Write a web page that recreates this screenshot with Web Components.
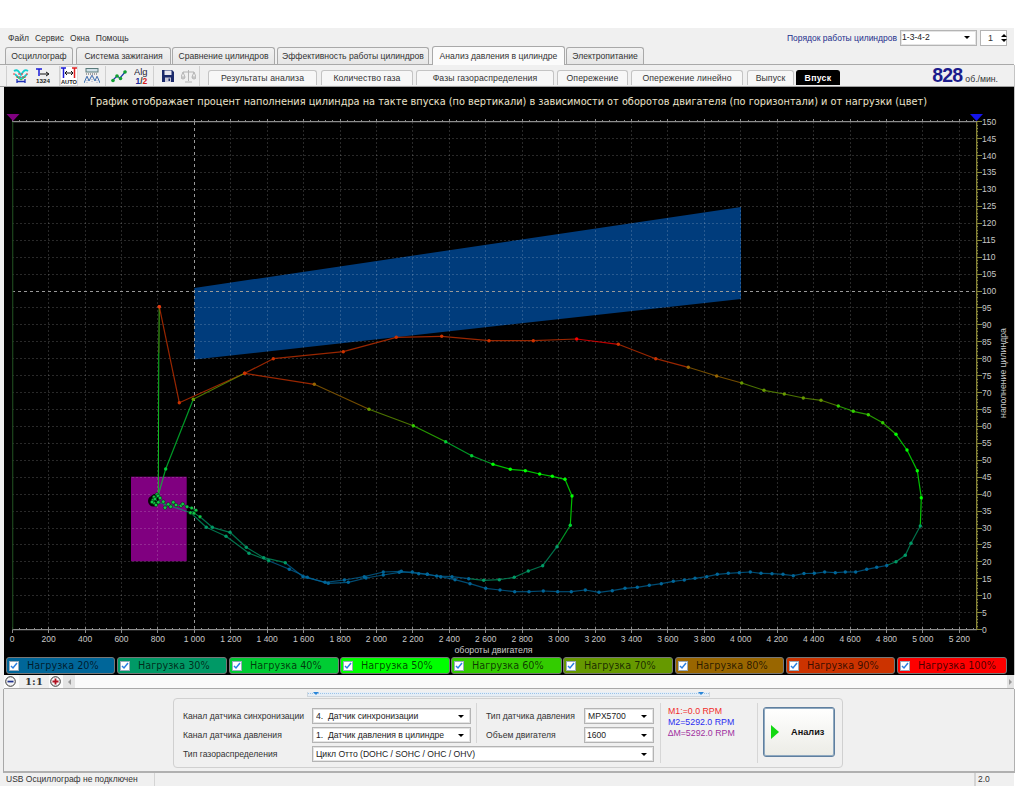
<!DOCTYPE html>
<html lang="ru">
<head>
<meta charset="utf-8">
<title>Анализ давления в цилиндре</title>
<style>
html,body{margin:0;padding:0;background:#fff}
body{font:8.5px "Liberation Sans",Arial,sans-serif;color:#222}
</style>
</head>
<body>
<scope-app></scope-app>
<script>
const FONT='"Liberation Sans",Arial,sans-serif';
function define(name,css,html,extra){
  customElements.define(name,class extends HTMLElement{
    constructor(){super();const r=this.attachShadow({mode:'open'});
      r.innerHTML='<style>'+css+'</style>'+(typeof html==='function'?html(this):html);}
    connectedCallback(){if(extra)extra(this)}
  });
}
/* primitive widgets */
define('win-tab',`:host{display:flex;align-items:center;justify-content:center;box-sizing:border-box;height:17px;align-self:flex-end;
  border:1px solid #a9a9a9;border-bottom:0;border-radius:3px 3px 0 0;background:linear-gradient(#f2f2f2,#e6e6e6);
  font:8.600px ${FONT};color:#333;white-space:nowrap}
  :host([active]){height:19px;background:#fbfbfb;margin-bottom:-1px;position:relative;z-index:1}`,'<slot></slot>');
define('sub-tab',`:host{display:flex;align-items:center;justify-content:center;box-sizing:border-box;height:15px;
  border:1px solid #c4c4c4;border-bottom:0;border-radius:3px 3px 0 0;background:#f7f7f7;
  font:8.700px ${FONT};color:#333;white-space:nowrap;letter-spacing:.1px}
  :host([active]){background:#000;border-color:#000;color:#fff;font-weight:bold;letter-spacing:.3px}`,'<slot></slot>');
define('win-combo',`:host{display:flex;align-items:center;box-sizing:border-box;height:16px;background:#fff;
  border:1px solid #b4b4b4;box-shadow:inset 0 0 0 1px #e4e4e4;padding:0 6px 0 3px;font:8.600px ${FONT};color:#222;white-space:pre}
  span{flex:1;overflow:hidden;padding-bottom:1px}
  i{width:0;height:0;border:3px solid transparent;border-top:3px solid #000;border-bottom:0;flex:none}`,
  '<span><slot></slot></span><i></i>');
define('field-label',`:host{display:flex;align-items:center;font:8.600px ${FONT};color:#333;white-space:nowrap}`,'<slot></slot>');
define('tool-sep',`:host{display:block;width:1px;height:20px;background:#d0d0d0;flex:none;align-self:center}`,'');
define('tool-icon',`:host{display:flex;align-items:center;justify-content:center;flex:none;height:20px;align-self:center}
  :host([pressed]){background:#fff;box-shadow:inset 0 0 0 1px #ddd}`,'<slot></slot>');

/* menu row */
define('menu-row',`:host{display:flex;align-items:center;height:19px;box-sizing:border-box;padding:0 7px 0 8px;font:8.500px ${FONT};color:#333}
  .m{display:flex;gap:6px;flex:1}
  .o{color:#1c2f8c;margin-right:3px}
  win-combo{width:77px;height:16px;padding-left:1px}
  .spin{margin-left:3px;width:27px;height:16px;box-sizing:border-box;border:1px solid #b4b4b4;background:#fff;display:flex;align-items:center;padding:0 4px 0 7px;gap:8px;font-size:9px}
  .ar{display:flex;flex-direction:column;gap:2px}
  .ar b{display:block;width:0;height:0;border:3px solid transparent;border-top:0;border-bottom:3px solid #000}
  .ar b+b{border-bottom:0;border-top:3px solid #000}`,
  `<div class="m"><span>Файл</span><span>Сервис</span><span>Окна</span><span>Помощь</span></div>
   <span class="o">Порядок работы цилиндров</span>
   <win-combo>1-3-4-2</win-combo>
   <div class="spin"><span>1</span><div class="ar"><b></b><b></b></div></div>`);

/* main tabs */
define('tab-strip',`:host{display:flex;height:18px;box-sizing:border-box;padding-left:5px;border-bottom:1px solid #a9a9a9;align-items:flex-end}`,
  `<win-tab style="width:68px;margin-right:3px">Осциллограф</win-tab>
   <win-tab style="width:95px;margin-right:1px">Система зажигания</win-tab>
   <win-tab style="width:103px;margin-right:2px">Сравнение цилиндров</win-tab>
   <win-tab style="width:152px;margin-right:3px">Эффективность работы цилиндров</win-tab>
   <win-tab active style="width:133px;margin-right:1px">Анализ давления в цилиндре</win-tab>
   <win-tab style="width:78px">Электропитание</win-tab>`);

/* toolbar */
const SVG=(w,h,b)=>`<svg xmlns="http://www.w3.org/2000/svg" width="${w}" height="${h}" viewBox="0 0 ${w} ${h}">${b}</svg>`;
const ICONS={
 net:SVG(16,16,`<path d="M1 3q3-2 5 1l2 3 2-3q2-3 5-1M2 6q3 4 6 4t6-4" fill="none" stroke="#12d0d0" stroke-width="1.800"/>
   <path d="M0 6h3M5 6h6M13 6h3M3 9h10" stroke="#ec3a40" stroke-dasharray="2 1"/><path d="M4 9l4 3 4-3" fill="none" stroke="#2ab34a"/>
   <path d="M4 11v4M12 11v4M4 13.500h8" fill="none" stroke="#1d2fb5" stroke-width="1.300"/>`),
 scale:SVG(14,16,`<path d="M0 1h6M3 1v7" stroke="#1a1ad8" stroke-width="1.500" fill="none"/><path d="M4 6h8M10 4l3 2-3 2" stroke="#111" fill="none"/>
   <text x="0" y="15" font-family="Liberation Sans" font-size="6" font-weight="bold" fill="#222" textLength="14" lengthAdjust="spacingAndGlyphs">1324</text>`),
 auto:SVG(16,17,`<path d="M0 1h5M2.500 1v10" stroke="#1a1ad8" stroke-width="1.500" fill="none"/><path d="M11 1h5M13.500 1v10" stroke="#e02020" stroke-width="1.500" fill="none"/>
   <path d="M4 6h8M6 4l-2 2 2 2M10 4l2 2-2 2" stroke="#111" fill="none"/>
   <text x="0" y="16.500" font-family="Liberation Sans" font-size="6" font-weight="bold" fill="#222" textLength="16" lengthAdjust="spacingAndGlyphs">AUTO</text>`),
 wave:SVG(16,16,`<rect x="2" y="0.500" width="12" height="3.500" fill="#cfe0e8" stroke="#5a7a7a"/><path d="M2 6h12" stroke="#555" stroke-dasharray="1 1"/>
   <path d="M0 15l3-7 2 5 3-6 3 6 2-5 3 7" fill="none" stroke="#3a6fb0"/><path d="M3 8v7M8 7v8M13 8v7" stroke="#a0a0c0" stroke-dasharray="1 1"/>`),
 zig:SVG(16,14,`<path d="M1 12l5-5 3 2 6-7" fill="none" stroke="#1a3aa8" stroke-width="1.200"/><g fill="#10a030"><circle cx="2" cy="11.500" r="1.800"/><circle cx="6" cy="7" r="1.800"/><circle cx="9.500" cy="9.500" r="1.800"/><circle cx="14" cy="3" r="1.800"/></g>`),
 alg:SVG(14,18,`<text x="0" y="8" font-family="Liberation Sans" font-size="9.500" fill="#223" textLength="13.500" lengthAdjust="spacingAndGlyphs">Alg</text>
   <text x="1.500" y="17" font-family="Liberation Sans" font-size="8.500" font-weight="bold" fill="#1a2a9a">1<tspan fill="#333">/</tspan><tspan fill="#d82020">2</tspan></text>`),
 save:SVG(12,12,`<path d="M0 0h10l2 2v10H0z" fill="#1b2a6b"/><rect x="2.500" y="0.500" width="7" height="4.500" fill="#e8e8f0"/><rect x="3" y="7.500" width="6" height="4.500" fill="#c9c9d8"/><rect x="6.500" y="8.500" width="1.500" height="2.500" fill="#1b2a6b"/>`),
 bal:SVG(15,14,`<path d="M7.500 1v11M4 13h7M2 3h11M2 3l-2 5M2 3l2 5M13 3l-2 5M13 3l2 5" fill="none" stroke="#b4b4b4"/><path d="M0 8a2 2 0 0 0 4 0zM11 8a2 2 0 0 0 4 0z" fill="#d8d8d8" stroke="#b4b4b4"/>`)
};
define('tool-bar',`:host{display:flex;height:22px;box-sizing:border-box;padding:0 16px 0 6px;align-items:flex-end;border-bottom:1px solid #a0a0a0;background:#f0f0f0;box-shadow:1px 0 0 #c4c4c4}
  .ic{display:flex;height:21px;align-items:center}
  .tabs{display:flex;margin-left:8px;align-items:flex-start;align-self:flex-end;height:16px}
  .tabs sub-tab{margin-right:3px}
  .rpm{margin-left:auto;display:flex;align-items:baseline;align-self:flex-end;height:21px;color:#1c1c8c}
  .rpm b{font:bold 19.500px ${FONT};line-height:20px;margin-right:3px;letter-spacing:-.8px}
  .rpm span{font:8.700px ${FONT};color:#333}`,
  `<div class="ic"><tool-sep></tool-sep>
   <tool-icon style="margin-left:6px">${ICONS.net}</tool-icon>
   <tool-icon style="margin-left:7px">${ICONS.scale}</tool-icon>
   <tool-sep style="margin-left:9px"></tool-sep>
   <tool-icon pressed style="width:18px">${ICONS.auto}</tool-icon>
   <tool-icon style="margin-left:6px">${ICONS.wave}</tool-icon>
   <tool-sep style="margin-left:5px"></tool-sep>
   <tool-icon style="margin-left:5px">${ICONS.zig}</tool-icon>
   <tool-icon style="margin-left:7px">${ICONS.alg}</tool-icon>
   <tool-sep style="margin-left:5px"></tool-sep>
   <tool-icon style="margin-left:8px">${ICONS.save}</tool-icon>
   <tool-icon style="margin-left:7px">${ICONS.bal}</tool-icon>
   <tool-sep style="margin-left:3px"></tool-sep></div>
   <div class="tabs">
    <sub-tab style="width:109px;margin-right:4px">Результаты анализа</sub-tab>
    <sub-tab style="width:92px">Количество газа</sub-tab>
    <sub-tab style="width:138px">Фазы газораспределения</sub-tab>
    <sub-tab style="width:71px">Опережение</sub-tab>
    <sub-tab style="width:112px;margin-right:4px">Опережение линейно</sub-tab>
    <sub-tab style="width:47px;margin-right:2px">Выпуск</sub-tab>
    <sub-tab active style="width:44px">Впуск</sub-tab>
   </div>
   <div class="rpm"><b>828</b><span>об./мин.</span></div>`);

/* chart */
const C=['#006699','#009966','#00cc33','#00ff00','#33cc00','#669900','#996600','#cc3300','#ff0000'];
const X=v=>12.2+.18214*v, Y=v=>629.6-3.386*v;
const OUTER=[
 [1,[[190.7,512.7],[206.3,527.3],[226,536.3],[249,553.3],[268.7,560.7]]],
 [0,[[289.3,569.3],[307.3,577.3],[328.3,583.3],[348.3,582.3],[366,578],[383.3,575],[399.3,572.3],[412.3,572],[427.3,574.3],[440.7,576.7],[455,579.7],[470,583.7],[485.7,588.3],[500,590],[514.7,591.7],[529,591.7],[543.3,591],[557.7,591.7],[571.3,591.7],[585.3,590],[599,592.3],[612.3,590.7],[625,588.3],[637.3,587.3],[649.3,585.3],[661.3,583.7],[673.3,581.3],[684.3,580],[695,578.3],[706.7,576.7],[717.3,574.3],[728.3,573.3],[739.3,572.7],[750.3,572],[761,573.3],[772,573.7],[783,574.3],[793.3,575.7],[804,573.5],[814.3,573.3],[824.7,572],[835.3,572.7],[845.3,572],[855.7,572],[866.7,569.3],[876.7,567.3],[886.7,565.5]]],
 [1,[[896,561.7],[905.3,555.3],[911,543.3],[920.3,526]]],
 [3,[[921.3,497.7],[917.3,470.7],[907,450],[896,434.3]]],
 [4,[[882.7,422.7],[868.3,414.7],[853.3,411.3],[838.3,406]]],
 [5,[[821,400.3],[803.3,398],[784.3,394],[764,390.3],[741.7,383]]],
 [6,[[716.7,376],[688.3,367.3]]],
 [7,[[655.7,358.7],[618.3,344.3]]],
 [8,[[576.7,339]]],
 [7,[[533.3,340.7],[489,340.7],[441.7,336.3],[396.3,337.3],[343.3,351.7],[273.3,358.7],[244.7,373.3],[179.3,402.7]]],
 [7,[[159.3,306.7]]]
];
const INNER=[
 [1,[[200,516.7],[212.3,527.3],[230,532.3],[246.3,547.3],[263.7,557.7],[285.3,562.7]]],
 [0,[[303,576.7],[325,582.3],[344.3,580],[364.3,576.7],[383.3,572],[401.3,571.3],[418.7,573.7],[427.3,574.3],[436.7,576],[452,576.7],[468.7,578.7]]],
 [1,[[483.7,580.3],[499.3,579.7],[514.3,577.3],[528.3,571],[542.7,565.7],[557,546.7]]],
 [2,[[570.3,525.3]]],
 [3,[[572,496],[565,479.3],[552.3,476.3],[539.7,474],[525.3,470.7],[510.3,469.3],[493,464.3]]],
 [2,[[471.7,455.7],[445.7,441.7]]],
 [4,[[413.3,425.7]]],
 [5,[[369,409.3]]],
 [6,[[314.3,384.3]]],
 [7,[[244.7,373.3]]],
 [5,[[193.3,399.3]]],
 [2,[[165.7,469],[158.3,495]]]
];
const CLUSTER=[[154,497],[153,500],[154,503],[156,505],[152,502],[157,494.500],[158,496],[155,499],[158.3,502.3],[160,498],[163.3,501.7],[165,507.7],[168.3,504.3],[170.7,506.7],[173.3,502.3],[176,505],[181,505.7],[182.7,504],[187,506.7],[191.7,508],[196,510.3],[190.3,512.7],[194,513.3],[200,516.7]];
function curve(runs,start){
  let p=start,out='',dots='';
  for(const [ci,pts] of runs){for(const q of pts){
    if(p)out+=`<line x1="${p[0]}" y1="${p[1]}" x2="${q[0]}" y2="${q[1]}" stroke="${C[ci]}" stroke-opacity=".75" stroke-width="1.200"/>`;
    dots+=`<circle cx="${q[0]}" cy="${q[1]}" r="1.700" fill="${C[ci]}"/>`;p=q;}}
  return out+dots;
}
function chart(){
  let g='',bright='',t='';
  const L=12.2,R=976.7,T=121.7,B=629.6;
  for(let v=0;v<=5200;v+=200){const x=X(v);
    if(v===1000)bright+=`<line x1="${x}" x2="${x}" y1="${T}" y2="${B}"/>`;
    else if(v>0)g+=`<line x1="${x}" x2="${x}" y1="${T}" y2="${B}"/>`;
    const lab=v>=1000?Math.floor(v/1000)+' '+String(v%1000).padStart(3,'0'):String(v);
    t+=`<text x="${x}" y="642" text-anchor="middle">${lab}</text>`;}
  for(let v=5;v<150;v+=5){const y=Y(v);
    if(v===100)bright+=`<line x1="${L}" x2="${R}" y1="${y}" y2="${y}"/>`;
    else g+=`<line x1="${L}" x2="${R}" y1="${y}" y2="${y}"/>`;}
  let yt='',ml='';
  for(let v=0;v<=150;v+=5){t+=`<text x="982" y="${Y(v)+3}">${v}</text>`;
    yt+=`<line x1="${R}" x2="${R+5}" y1="${Y(v)}" y2="${Y(v)}"/>`;}
  for(let v=0;v<=150;v+=1)ml+=`<line x1="${R}" x2="${R+1.6}" y1="${Y(v)}" y2="${Y(v)}"/>`;
  let bt='';
  for(let v=0;v<=5280;v+=40){const x=X(v);const big=v%200===0;
    bt+=`<line x1="${x}" x2="${x}" y1="${B-(big?3:1.500)}" y2="${B+(big?3:0)}"/>`+`<line x1="${x}" x2="${x}" y1="${T-(big?3:1.500)}" y2="${T}"/>`;}
  let cl='';
  for(const q of [[153.5,501,5.500],[155,498,4]])cl+=`<circle cx="${q[0]}" cy="${q[1]}" r="${q[2]}" fill="#050505"/>`;
  const dots=CLUSTER.map(q=>`<circle cx="${q[0]}" cy="${q[1]}" r="1.800" fill="#12c845" stroke="#000" stroke-width=".4"/>`).join('');
  const path=CLUSTER.slice(6).map(q=>q.join(',')).join(' ');
  return `<svg xmlns="http://www.w3.org/2000/svg" width="1010" height="570" viewBox="4 87 1010 570">
   <rect x="4" y="87" width="1010" height="570" fill="#000"/>
   <text x="508.500" y="105" text-anchor="middle" font-family="DejaVu Sans" font-size="10.500" fill="#ece4cc" textLength="837" lengthAdjust="spacingAndGlyphs">График отображает процент наполнения цилиндра на такте впуска (по вертикали) в зависимости от оборотов двигателя (по горизонтали) и от нагрузки (цвет)</text>
   <polygon points="194.300,288 741,207 741,299 194.300,359.500" fill="#003c7c"/>
   <rect x="131" y="476.700" width="55.700" height="84.600" fill="#800080"/>
   <g stroke="#fff" stroke-opacity=".16" stroke-dasharray="2 2" shape-rendering="crispEdges">${g}</g>
   <g stroke="#999" stroke-dasharray="3 3" shape-rendering="crispEdges">${bright}</g>
   <g stroke="#8d8d8d" stroke-width="1.300"><line x1="12" x2="977" y1="${T}" y2="${T}"/><line x1="12" x2="977" y1="${B}" y2="${B}"/></g>
   <g stroke="#8d8d8d" shape-rendering="crispEdges">${bt}</g>
   <line x1="12.700" x2="12.700" y1="${T}" y2="${B}" stroke="#1d461d" stroke-width="1.200"/>
   <line x1="${R}" x2="${R}" y1="${T}" y2="${B}" stroke="#8c8a3a" stroke-width="1.300"/>
   <g stroke="#8c8a3a" shape-rendering="crispEdges">${yt}${ml}</g>
   <polygon points="6.500,114 19.500,114 13,121" fill="#800080"/>
   <polygon points="970,114 983,114 976.500,121" fill="#1414ee"/>
   <line x1="159.300" y1="306.700" x2="158.800" y2="353" stroke="#2f7d10" stroke-width="1.500"/>
   <line x1="158.800" y1="353" x2="158.300" y2="493" stroke="#10c020" stroke-width="1"/>
   ${cl}
   <polyline points="${path}" fill="none" stroke="#00a050"/>
   ${curve(OUTER,[158,502])}
   ${curve(INNER,null)}
   ${dots}
   <circle cx="159.300" cy="306.700" r="1.800" fill="#e03a10"/>
   <g font-family="Liberation Sans" font-size="8.500" fill="#c8c8c8">${t}</g>
   <text x="493.500" y="653" text-anchor="middle" font-family="Liberation Sans" font-size="8.800" fill="#c8c8c8">обороты двигателя</text>
   <text transform="translate(1006 373) rotate(-90)" text-anchor="middle" font-family="Liberation Sans" font-size="8.700" fill="#c8c8c8">наполнение цилиндра</text>
  </svg>`;
}
define('scope-chart',`:host{display:block;height:570px;line-height:0;margin-left:4px;width:1010px;box-shadow:1px 0 0 #c4c4c4}`,chart);

/* legend */
define('load-chip',`:host{display:flex;align-items:center;box-sizing:border-box;height:17px;border:1px solid #777;border-radius:3px;
  background:var(--c);font:9.700px "DejaVu Sans",sans-serif;color:rgba(0,0,0,.72);white-space:nowrap;padding-left:2px}
  .b{width:10px;height:10px;background:#fff;border:1px solid #9ab;box-sizing:border-box;margin-right:8px;flex:none;display:flex}
  svg{display:block}`,
  `<span class="b"><svg width="8" height="8" viewBox="0 0 8 8"><path d="M1 4l2 2 4-5" fill="none" stroke="#2a7fe0" stroke-width="1.500"/></svg></span><slot></slot>`);
define('load-legend',`:host{display:flex;height:18px;background:#000;box-sizing:border-box;padding-left:2px;margin-left:4px;width:1010px;align-items:flex-start;box-shadow:1px 0 0 #c4c4c4}`,
  ()=>[[109,2,20],[110,2,30],[110,1,40],[110,1,50],[111,1,60],[110,2,70],[109,2,80],[109,2,90],[110,0,100]].map((d,i)=>
   `<load-chip style="--c:${C[i]};width:${d[0]}px;margin-right:${d[1]}px">Нагрузка ${d[2]}%</load-chip>`).join(''));

/* zoom bar */
define('zoom-bar',`:host{display:flex;height:14px;box-sizing:border-box;align-items:center;border-bottom:1px solid #a8a8a8;background:#fafafa;margin-left:4px;width:1010px;padding-left:1px;position:relative}
  svg{display:block;flex:none}
  .r{width:30px;margin:0 1px 0 3px;height:13px;background:#eee;text-align:center;font:bold 10px "DejaVu Serif",serif;line-height:14px;color:#333;letter-spacing:.2px}
  .a{width:12px;height:13px;background:#e4e4e4;margin-left:2px;display:flex;align-items:center;justify-content:center}
  .t{flex:1}
  i{width:0;height:0;border:3px solid transparent;border-right:3px solid #999;border-left:0}
  .e i{border-left:3px solid #999;border-right:0}
  .e{width:7px;margin:0}`,
  `<svg width="11" height="11" viewBox="0 0 11 11"><circle cx="5.500" cy="5.500" r="4.800" fill="#f4f4f4" stroke="#333"/><rect x="2.500" y="4.700" width="6" height="1.700" fill="#1c2f8c"/></svg>
   <div class="r">1:1</div>
   <svg width="11" height="11" viewBox="0 0 11 11"><circle cx="5.500" cy="5.500" r="4.800" fill="#f4f4f4" stroke="#333"/><path d="M2.500 5.500h6M5.500 2.500v6" stroke="#b01020" stroke-width="1.800"/></svg>
   <div class="a"><i></i></div><div class="t"></div><div class="a e"><i></i></div>`);

/* controls */
define('control-panel',`:host{display:block;height:84px;box-sizing:border-box;padding-top:3px;background:#f0f0f0;border-left:1px solid #a8a8a8;margin-left:3px;border-bottom:2px solid #b0b0b0;border-right:1px solid #b0b0b0;width:1012px}
  .split{margin-left:303px;width:403px;height:5px;box-sizing:border-box;background:#e6eef6;border:1px solid #cfd6dc;border-top:0;position:relative;
    background-image:repeating-linear-gradient(90deg,#9cc4e8 0 1px,transparent 1px 2px);background-size:auto 1px;background-repeat:repeat-x;background-position:0 1px}
  .split i{position:absolute;top:0;width:0;height:0;border:3px solid transparent;border-top:3px solid #2a86d8;border-bottom:0}
  .split i:first-child{left:5px}.split i:last-child{right:5px}
  .g{margin:1px 0 0 169px;width:670px;height:70px;box-sizing:border-box;border:1px solid #d0d0d0;border-radius:4px;padding:9px 0 0 9px;display:flex;background:#f0f0f0}
  .f{display:grid;grid-template-columns:129px 159px 15px 98px 70px;grid-template-rows:16px 16px 16px;row-gap:3px;width:471px;flex:none}
  .f .wide{grid-column:2/6}
  .s{position:relative;grid-row:1/3;grid-column:3}
  .s::after{content:"";position:absolute;left:5px;top:-5px;bottom:0;width:1px;background:#d6d6d6}
  .v{width:1px;background:#d6d6d6;height:60px;margin:-5px 0 0 6px;flex:none}
  .m{width:90px;flex:none;padding:0 0 0 7px;box-sizing:border-box;font:8.800px/11px ${FONT};margin-top:-2px;white-space:nowrap}
  .m div:nth-child(1){color:#f02c2c}.m div:nth-child(2){color:#2c2cf0}.m div:nth-child(3){color:#a030a0}
  .btn{margin:-1px 0 0 5px;width:72px;height:50px;box-sizing:border-box;border:1px solid #5f7f9f;border-radius:3px;box-shadow:inset 0 0 0 1px #8fa9c0;background:linear-gradient(#fff,#ecece6);
    display:flex;align-items:center;font:bold 9.200px ${FONT};color:#111;padding-left:7px;flex:none;gap:12px}
  .btn i{width:0;height:0;border:7.500px solid transparent;border-left:8px solid #12d812;border-right:0;flex:none}`,
  `<div class="split"><i></i><i></i></div>
   <div class="g">
    <div class="f">
     <field-label>Канал датчика синхронизации</field-label><win-combo>4.  Датчик синхронизации</win-combo><div class="s"></div><field-label>Тип датчика давления</field-label><win-combo>MPX5700</win-combo>
     <field-label>Канал датчика давления</field-label><win-combo style="grid-column:2">1.  Датчик давления в цилиндре</win-combo><field-label style="grid-column:4">Объем двигателя</field-label><win-combo style="padding-left:2px">1600</win-combo>
     <field-label>Тип газораспределения</field-label><win-combo class="wide">Цикл Отто (DOHC / SOHC / OHC / OHV)</win-combo>
    </div>
    <div class="v"></div>
    <div class="m"><div>M1:=0.0 RPM</div><div>M2=5292.0 RPM</div><div>∆M=5292.0 RPM</div></div>
    <div class="v"></div>
    <div class="btn"><i></i><span>Анализ</span></div>
   </div>`);

/* status */
define('status-bar',`:host{display:flex;height:13px;font:8.500px ${FONT};color:#333;background:#f0f0f0;line-height:13px}
  div{box-sizing:border-box;padding-left:6px;border-right:1px solid #d4d4d4;white-space:nowrap}
  .a{width:155px}.b{flex:1}.c{width:39px;border:0;padding-left:2px;border-left:1px solid #d4d4d4}`,
  `<div class="a">USB Осциллограф не подключен</div><div class="b"></div><div class="c">2.0</div>`);

/* app */
define('scope-app',`:host{display:block;margin-top:28px;width:1014px;height:758px;background:#f0f0f0;box-sizing:border-box}`,
  `<menu-row></menu-row><tab-strip></tab-strip><tool-bar></tool-bar>
   <scope-chart></scope-chart><load-legend></load-legend><zoom-bar></zoom-bar><control-panel></control-panel><status-bar></status-bar>`);
</script>
</body>
</html>
